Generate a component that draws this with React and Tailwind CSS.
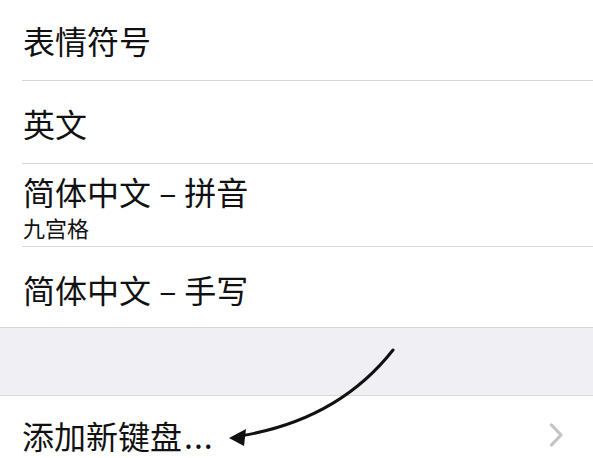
import React from 'react';

const font = { fontFamily: '"Noto Sans CJK SC", "Noto Sans", sans-serif' };

const Row = ({ h, inset = true, children }) => (
  <div className={`relative flex items-center bg-white pl-[23px] ${h}`}>
    {children}
    <div className={`absolute bottom-0 right-0 h-px bg-[#d8d8dc] ${inset ? 'left-[22px]' : 'left-0'}`} />
  </div>
);

const Title = ({ a, b }) => (
  <span className="text-[32px] leading-none whitespace-pre">
    {a} <span className="ml-[1px]">–</span><span className="ml-[8px]">{b}</span>
  </span>
);

export default function App() {
  return (
    <div className="relative w-[593px] h-[458px] overflow-hidden bg-white text-[#111111]" style={font}>
      <Row h="h-[81px]">
        <span className="text-[32px] leading-none -mt-[1px]">表情符号</span>
      </Row>
      <Row h="h-[83px]">
        <span className="text-[32px] leading-none">英文</span>
      </Row>
      <Row h="h-[83px]">
        <div className="flex flex-col pt-[2px]">
          <Title a="简体中文" b="拼音" />
          <span className="text-[22px] leading-none mt-[9px]">九宫格</span>
        </div>
      </Row>
      <Row h="h-[81px]" inset={false}>
        <span className="mt-[2px] flex"><Title a="简体中文" b="手写" /></span>
      </Row>
      <div className="h-[68px] bg-[#efeff4] border-b border-[#d8d8dc]" />
      <div className="flex items-center justify-between bg-white pl-[22px] pr-[29px] h-[80px]">
        <span className="text-[32px] leading-none -mt-[3px]">
          添加新键盘<span className="tracking-[1px] ml-[2px]">...</span>
        </span>
        <svg width="15" height="24" viewBox="0 0 15 24" className="-mt-[3px]">
          <path d="M2.5 2 L12 12 L2.5 22" fill="none" stroke="#c4c4c8" strokeWidth="3.2" strokeLinecap="round" strokeLinejoin="round" />
        </svg>
      </div>
      <svg className="absolute left-0 top-0 pointer-events-none" width="593" height="458" viewBox="0 0 593 458">
        <path d="M393 350 Q338 420 240 436" fill="none" stroke="#111" strokeWidth="3" strokeLinecap="round" />
        <path d="M229 438 L246 429 L244 446 Z" fill="#111" />
      </svg>
    </div>
  );
}
